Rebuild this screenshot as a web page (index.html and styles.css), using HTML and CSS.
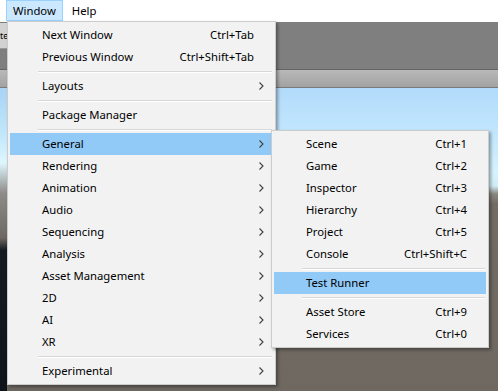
FILE: index.html
```html
<!DOCTYPE html>
<html>
<head>
  <meta http-equiv="content-type" content="text/html; charset=utf-8" />
  <title>Window menu</title>
  <link rel="stylesheet" href="styles.css">
</head>
<body>
  <div class="menubar">
    <div class="menubar-item active">Window</div>
    <div class="menubar-item">Help</div>
  </div>

  <div class="editor">
    <div class="toolbar"><div class="tab">te</div></div>
    <div class="tabstrip"></div>
    <div class="scene">
      <div class="scene-left"></div>
      <div class="scene-main"></div>
    </div>
  </div>

  <div class="menu main-menu">
    <div class="item"><span class="label">Next Window</span><span class="key">Ctrl+Tab</span><span class="arrow"></span></div>
    <div class="item"><span class="label">Previous Window</span><span class="key">Ctrl+Shift+Tab</span><span class="arrow"></span></div>
    <div class="sep"></div>
    <div class="item"><span class="label">Layouts</span><span class="key"></span><span class="arrow"><svg width="5" height="8"><polyline points="0.5,0.5 4,4 0.5,7.5" /></svg></span></div>
    <div class="sep"></div>
    <div class="item"><span class="label">Package Manager</span><span class="key"></span><span class="arrow"></span></div>
    <div class="sep"></div>
    <div class="item hot"><span class="label">General</span><span class="key"></span><span class="arrow"><svg width="5" height="8"><polyline points="0.5,0.5 4,4 0.5,7.5" /></svg></span></div>
    <div class="item"><span class="label">Rendering</span><span class="key"></span><span class="arrow"><svg width="5" height="8"><polyline points="0.5,0.5 4,4 0.5,7.5" /></svg></span></div>
    <div class="item"><span class="label">Animation</span><span class="key"></span><span class="arrow"><svg width="5" height="8"><polyline points="0.5,0.5 4,4 0.5,7.5" /></svg></span></div>
    <div class="item"><span class="label">Audio</span><span class="key"></span><span class="arrow"><svg width="5" height="8"><polyline points="0.5,0.5 4,4 0.5,7.5" /></svg></span></div>
    <div class="item"><span class="label">Sequencing</span><span class="key"></span><span class="arrow"><svg width="5" height="8"><polyline points="0.5,0.5 4,4 0.5,7.5" /></svg></span></div>
    <div class="item"><span class="label">Analysis</span><span class="key"></span><span class="arrow"><svg width="5" height="8"><polyline points="0.5,0.5 4,4 0.5,7.5" /></svg></span></div>
    <div class="item"><span class="label">Asset Management</span><span class="key"></span><span class="arrow"><svg width="5" height="8"><polyline points="0.5,0.5 4,4 0.5,7.5" /></svg></span></div>
    <div class="item"><span class="label">2D</span><span class="key"></span><span class="arrow"><svg width="5" height="8"><polyline points="0.5,0.5 4,4 0.5,7.5" /></svg></span></div>
    <div class="item"><span class="label">AI</span><span class="key"></span><span class="arrow"><svg width="5" height="8"><polyline points="0.5,0.5 4,4 0.5,7.5" /></svg></span></div>
    <div class="item"><span class="label">XR</span><span class="key"></span><span class="arrow"><svg width="5" height="8"><polyline points="0.5,0.5 4,4 0.5,7.5" /></svg></span></div>
    <div class="sep"></div>
    <div class="item"><span class="label">Experimental</span><span class="key"></span><span class="arrow"><svg width="5" height="8"><polyline points="0.5,0.5 4,4 0.5,7.5" /></svg></span></div>
  </div>

  <div class="menu sub-menu">
    <div class="item"><span class="label">Scene</span><span class="key">Ctrl+1</span></div>
    <div class="item"><span class="label">Game</span><span class="key">Ctrl+2</span></div>
    <div class="item"><span class="label">Inspector</span><span class="key">Ctrl+3</span></div>
    <div class="item"><span class="label">Hierarchy</span><span class="key">Ctrl+4</span></div>
    <div class="item"><span class="label">Project</span><span class="key">Ctrl+5</span></div>
    <div class="item"><span class="label">Console</span><span class="key">Ctrl+Shift+C</span></div>
    <div class="sep"></div>
    <div class="item hot"><span class="label">Test Runner</span><span class="key"></span></div>
    <div class="sep"></div>
    <div class="item"><span class="label">Asset Store</span><span class="key">Ctrl+9</span></div>
    <div class="item"><span class="label">Services</span><span class="key">Ctrl+0</span></div>
  </div>
</body>
</html>
```

FILE: styles.css
```css
html, body {
  margin: 0;
  height: 100%;
  overflow: hidden;
}
body {
  font-family: "Noto Sans", "Liberation Sans", sans-serif;
  font-size: 11.3px;
  color: #000;
  background: #6e6861;
  position: relative;
}

/* menu bar */
.menubar {
  height: 22px;
  background: #fff;
  display: flex;
  padding-left: 6px;
  box-sizing: border-box;
}
.menubar-item {
  height: 21px;
  line-height: 19px;
  padding: 0 6px;
  border: 1px solid transparent;
  box-sizing: border-box;
  margin-right: 2px;
}
.menubar-item.active {
  background: #cce8ff;
  border-color: #99d1ff;
}

/* editor behind the menus */
.editor {
  display: flex;
  flex-direction: column;
  height: calc(100% - 22px);
}
.toolbar {
  height: 48px;
  background: #7f7f7f;
  border-bottom: 1px solid #656565;
  box-sizing: border-box;
}
.tab {
  width: 7px;
  height: 25px;
  margin-top: 1px;
  overflow: hidden;
  background: #d2d2d2;
  border-bottom: 1px solid #9a9a9a;
  line-height: 25px;
  font-size: 9px;
  white-space: nowrap;
}
.tabstrip {
  height: 17px;
  background: linear-gradient(#b9b9b9, #a2a2a2);
  border-bottom: 1px solid #7a7a7a;
}
.scene {
  flex: 1;
  display: flex;
}
.scene-left {
  width: 7px;
  background: linear-gradient(#a9d3f5 0, #c4e9fb 50px, #dff6fd 75px, #8e8c88 105px, #6d6862 150px, #151b24 162px, #0f141c 100%);
}
.scene-main {
  flex: 1;
  background: linear-gradient(#b2dbfb 0, #c2e6fd 45px, #d6f2fe 85px, #d2ecf5 98px, #8a8680 106px, #726c65 116px, #6e6861 100%);
}

/* menus */
.menu {
  position: absolute;
  background: #f2f2f2;
  border: 1px solid #ccc;
  padding: 2px;
  box-shadow: 2px 2px 3px rgba(0, 0, 0, 0.35);
}
.main-menu {
  left: 7px;
  top: 21px;
  width: 269px;
  box-sizing: border-box;
}
.sub-menu {
  left: 271px;
  top: 130px;
  width: 218px;
  box-sizing: border-box;
}
.item {
  height: 22px;
  line-height: 22px;
  display: flex;
  align-items: center;
  padding-left: 32px;
  padding-right: 19px;
  white-space: nowrap;
}
.main-menu .item {
  padding-right: 9px;
}
.item .label {
  flex: 1;
}
.item .key {
  text-align: right;
}
.item .arrow {
  width: 10px;
  display: flex;
  justify-content: flex-end;
}
.arrow svg {
  display: block;
  fill: none;
  stroke: #404040;
  stroke-width: 1.1;
}
.item.hot {
  background: #91c9f7;
}
.sep {
  height: 1px;
  margin: 3px 1px 2px 28px;
  background: #d7d7d7;
  border-bottom: 1px solid #fff;
}
```
